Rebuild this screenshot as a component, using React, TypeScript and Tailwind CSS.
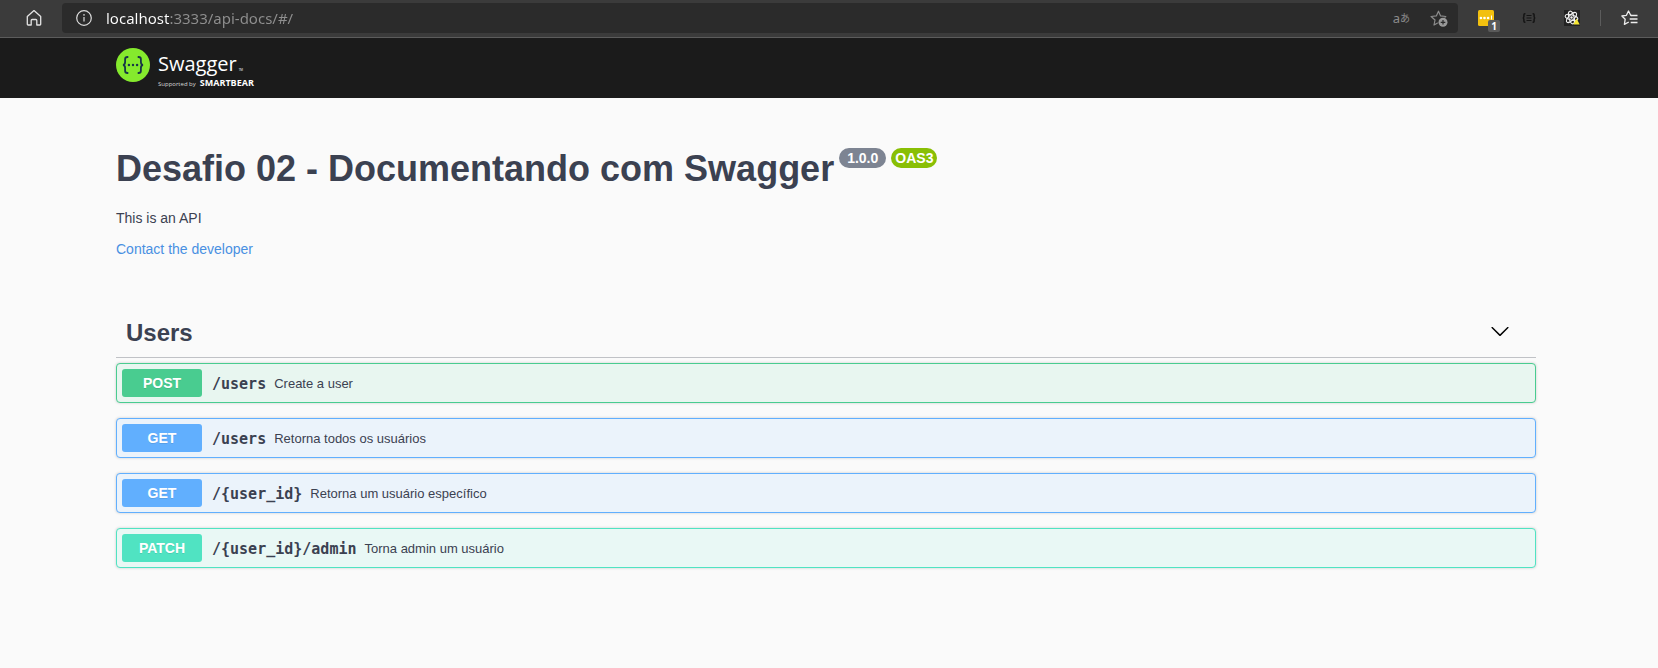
import React, { useState } from 'react';

type Method = 'POST' | 'GET' | 'PATCH';

interface Operation {
  method: Method;
  path: string;
  summary: string;
}

const operations: Operation[] = [
  { method: 'POST', path: '/users', summary: 'Create a user' },
  { method: 'GET', path: '/users', summary: 'Retorna todos os usuários' },
  { method: 'GET', path: '/{user_id}', summary: 'Retorna um usuário específico' },
  { method: 'PATCH', path: '/{user_id}/admin', summary: 'Torna admin um usuário' },
];

const blockStyle: Record<Method, string> = {
  POST: 'border-[#49cc90] bg-[#e8f6f0]',
  GET: 'border-[#61affe] bg-[#ebf3fb]',
  PATCH: 'border-[#50e3c2] bg-[#e9f8f5]',
};

const badgeStyle: Record<Method, string> = {
  POST: 'bg-[#49cc90]',
  GET: 'bg-[#61affe]',
  PATCH: 'bg-[#50e3c2]',
};

function HomeIcon() {
  return (
    <svg width="16" height="18" viewBox="0 0 16 18" fill="none" stroke="#e4e4e4" strokeWidth="1.3" strokeLinejoin="round">
      <path d="M1.3 7.6 8 1.6l6.7 6v7.6a.8.8 0 0 1-.8.8h-3.100v-4.600a.9.9 0 0 0-.9-.9H6.100a.9.9 0 0 0-.9.9V16H2.100a.8.8 0 0 1-.8-.8z" />
    </svg>
  );
}

function InfoIcon() {
  return (
    <svg width="16" height="16" viewBox="0 0 16 16" fill="none" stroke="#dcdcdc" strokeWidth="1.2">
      <circle cx="8" cy="8" r="7.3" />
      <path d="M8 7v4.500" />
      <circle cx="8" cy="4.9" r=".8" fill="#dcdcdc" stroke="none" />
    </svg>
  );
}

function AddFavoriteIcon() {
  return (
    <svg width="18" height="17" viewBox="0 0 18 17" fill="none">
      <path
        d="m8.500 1.200 2.100 4.700 5.200.6-3.900 3.500 1 5-4.400-2.500L4 15l1-5-3.900-3.500 5.200-.6z"
        stroke="#8c8c8c"
        strokeWidth="1.2"
        strokeLinejoin="round"
      />
      <circle cx="13" cy="12.3" r="5.3" fill="#2b2b2b" />
      <circle cx="13" cy="12.3" r="4.5" fill="#9a9a9a" />
      <path d="M13 10v4.600M10.700 12.300h4.600" stroke="#2b2b2b" strokeWidth="1.2" />
    </svg>
  );
}

function NotesIcon() {
  return (
    <svg width="16" height="16" viewBox="0 0 16 16">
      <rect width="16" height="16" rx="1.5" fill="#f2c00f" />
      <circle cx="2.9" cy="8" r="1.3" fill="#fff" />
      <circle cx="6.5" cy="8" r="1.3" fill="#fff" />
      <circle cx="10.1" cy="8" r="1.3" fill="#fff" />
      <path d="M13.500 5.500v4" stroke="#fff" strokeWidth="1" />
    </svg>
  );
}

function BracesIcon() {
  return (
    <svg width="14" height="10" viewBox="0 0 14 10" fill="none" stroke="#141414" strokeWidth="1.5">
      <path d="M3.400.8h-.6c-.6 0-.9.3-.9.9v1.900c0 .8-.4 1.400-1.200 1.400.8 0 1.200.6 1.200 1.400v1.900c0 .6.3.9.9.9h.6M10.600.8h.6c.6 0 .9.3.9.9v1.900c0 .8.4 1.400 1.200 1.400-.8 0-1.200.6-1.200 1.400v1.900c0 .6-.3.9-.9.9h-.6" />
      <path d="M4.500 2.500h5M4.500 5h5M4.500 7.500h5" strokeWidth="1.2" />
    </svg>
  );
}

function ReactToolsIcon() {
  return (
    <svg width="16" height="16" viewBox="0 0 16 16">
      <rect width="16" height="16" fill="#222" />
      <g fill="none" stroke="#f0f0f0" strokeWidth="1.1" transform="translate(7.500 7.500)">
        <ellipse rx="6.5" ry="2.6" transform="rotate(15)" />
        <ellipse rx="6.5" ry="2.6" transform="rotate(75)" />
        <ellipse rx="6.5" ry="2.6" transform="rotate(135)" />
      </g>
      <circle cx="7.5" cy="7.5" r="1.2" fill="#f0f0f0" />
      <path d="m12.500 8.500 3.200 6H9.300z" fill="#f7e733" />
    </svg>
  );
}

function FavoritesIcon() {
  return (
    <svg width="17" height="16" viewBox="0 0 17 16" fill="none" stroke="#ededed" strokeWidth="1.3" strokeLinejoin="round">
      <path d="M10.500 5.500 9.700 5.300 7.500 1 5.400 5.300.9 6l3.300 3.200-.8 5.200 4.400-2.400" />
      <path d="M9.700 5.500h6.800M8.700 9h7.800M9.700 12.500h6.800" />
    </svg>
  );
}

function BrowserBar() {
  const [url, setUrl] = useState('localhost:3333/api-docs/#/');
  return (
    <div className="flex h-[38px] items-center border-b border-[#5c5c5c] bg-[#3b3b3b] pr-5 pb-px font-['Noto_Sans',sans-serif]">
      <button type="button" aria-label="Home" className="mr-5 ml-[26px]">
        <HomeIcon />
      </button>
      <div className="flex h-[30px] flex-1 items-center rounded bg-[#2b2b2b] pr-2.5 pl-3.5">
        <button type="button" aria-label="Site information">
          <InfoIcon />
        </button>
        <input
          type="text"
          aria-label="Address"
          value={url}
          onChange={(e) => setUrl(e.target.value)}
          className="ml-3.5 min-w-0 flex-1 bg-[linear-gradient(to_right,#ffffff_64px,#8f8f8f_64px)] bg-clip-text text-[15px] leading-6 text-transparent caret-white outline-none"
        />
        <button type="button" aria-label="Translate" className="mr-5 flex items-center text-[#8c8c8c]">
          <span className="text-[13px] leading-4">a</span>
          <span className="font-['Noto_Sans_CJK_JP',sans-serif] text-[10px] leading-4">あ</span>
        </button>
        <button type="button" aria-label="Add to favorites">
          <AddFavoriteIcon />
        </button>
      </div>
      <button type="button" aria-label="Notes" className="relative ml-5">
        <NotesIcon />
        <span className="absolute top-2.5 left-2.5 h-3 w-3 rounded-xs bg-[#5a5a5a] text-center font-['Open_Sans',sans-serif] text-[10px] leading-3 font-bold text-white">
          1
        </span>
      </button>
      <button type="button" aria-label="JSON viewer" className="ml-7">
        <BracesIcon />
      </button>
      <button type="button" aria-label="React tools" className="ml-7">
        <ReactToolsIcon />
      </button>
      <div className="mx-5 h-4 w-px bg-[#5c5c5c]" />
      <button type="button" aria-label="Favorites">
        <FavoritesIcon />
      </button>
    </div>
  );
}

function Logo() {
  return (
    <a href="#/" className="flex w-max items-start gap-2 font-['Open_Sans',sans-serif] text-white">
      <svg width="34" height="35" viewBox="0 0 34 35" fill="none">
        <circle cx="17" cy="17" r="17" fill="#85ea2d" />
        <path
          d="M12.300 9h-.8c-1.700 0-2.400.8-2.400 2.300v2.700c0 1.900-.6 2.800-2.100 3 1.500.2 2.100 1.100 2.100 3v2.700c0 1.500.7 2.300 2.400 2.300h.8M21.700 9h.8c1.700 0 2.400.8 2.400 2.300v2.700c0 1.900.6 2.800 2.100 3-1.500.2-2.100 1.100-2.100 3v2.700c0 1.500-.7 2.300-2.400 2.300h-.8"
          stroke="#173647"
          strokeWidth="1.8"
        />
        <circle cx="12.9" cy="17" r="1.2" fill="#173647" />
        <circle cx="17" cy="17" r="1.2" fill="#173647" />
        <circle cx="21.1" cy="17" r="1.2" fill="#173647" />
      </svg>
      <span className="flex flex-col pt-0.5">
        <span className="flex items-end gap-0.5 text-xl leading-7">
          Swagger
          <span className="text-[3px] leading-4">TM</span>
        </span>
        <span className="flex items-baseline gap-1 leading-[10px]">
          <span className="text-[6px] text-[#d8d8d8]">Supported by</span>
          <span className="text-[9px] font-bold">SMARTBEAR</span>
        </span>
      </span>
    </a>
  );
}

function OperationRow({ method, path, summary }: Operation) {
  return (
    <button
      type="button"
      className={`flex w-full items-center rounded border p-[5px] text-left shadow-[0_0_3px_rgba(0,0,0,0.19)] ${blockStyle[method]}`}
    >
      <span
        className={`w-20 rounded-[3px] text-center text-sm leading-7 font-bold text-white [text-shadow:0_1px_0_rgba(0,0,0,0.1)] ${badgeStyle[method]}`}
      >
        {method}
      </span>
      <span className="ml-2.5 pt-0.5 font-['DejaVu_Sans_Mono',monospace] text-[15px] leading-5 font-bold">{path}</span>
      <span className="ml-2 pt-px text-[13px] leading-5">{summary}</span>
    </button>
  );
}

export default function App() {
  const [open, setOpen] = useState(true);
  return (
    <div className="min-h-screen bg-[#fafafa] font-['Liberation_Sans',Arial,sans-serif] text-[#3b4151]">
      <BrowserBar />
      <header className="bg-[#1b1b1b] pr-1.5">
        <div className="mx-auto h-[60px] max-w-[1460px] px-5 pt-2.5">
          <Logo />
        </div>
      </header>
      <main className="pr-1.5">
        <div className="mx-auto max-w-[1460px] px-5 py-[50px]">
          <div className="flex items-start gap-[5px]">
            <h1 className="text-4xl leading-[41px] font-bold">Desafio 02 - Documentando com Swagger</h1>
            <span className="rounded-full bg-[#7d8492] px-2 text-sm leading-5 font-bold text-white">1.0.0</span>
            <span className="rounded-full bg-[#89bf04] px-1 text-sm leading-5 font-bold text-white">OAS3</span>
          </div>
          <p className="mt-5 text-sm leading-[18px]">This is an API</p>
          <a href="#/" className="mt-[13px] block w-max text-sm leading-[18px] text-[#4990e2]">
            Contact the developer
          </a>

          <section className="mt-[51px]">
            <div className="mb-[5px] flex items-start justify-between border-b border-[rgba(59,65,81,0.3)] py-2.5 pr-[26px] pl-2.5">
              <h2 className="text-2xl leading-7 font-bold">Users</h2>
              <button
                type="button"
                aria-label="Toggle Users"
                aria-expanded={open}
                onClick={() => setOpen(!open)}
                className="pt-0.5"
              >
                <svg width="20" height="20" viewBox="0 0 20 20" fill="#000">
                  <path d="M17.418 6.109c.272-.268.709-.268.979 0s.271.701 0 .969l-7.908 7.830c-.27.268-.707.268-.979 0l-7.908-7.830c-.27-.268-.27-.701 0-.969.271-.268.709-.268.979 0L10 13.250l7.418-7.141z" />
                </svg>
              </button>
            </div>
            {open && (
              <div className="flex flex-col gap-[15px]">
                {operations.map((op) => (
                  <OperationRow key={op.method + op.path} {...op} />
                ))}
              </div>
            )}
          </section>
        </div>
      </main>
    </div>
  );
}
